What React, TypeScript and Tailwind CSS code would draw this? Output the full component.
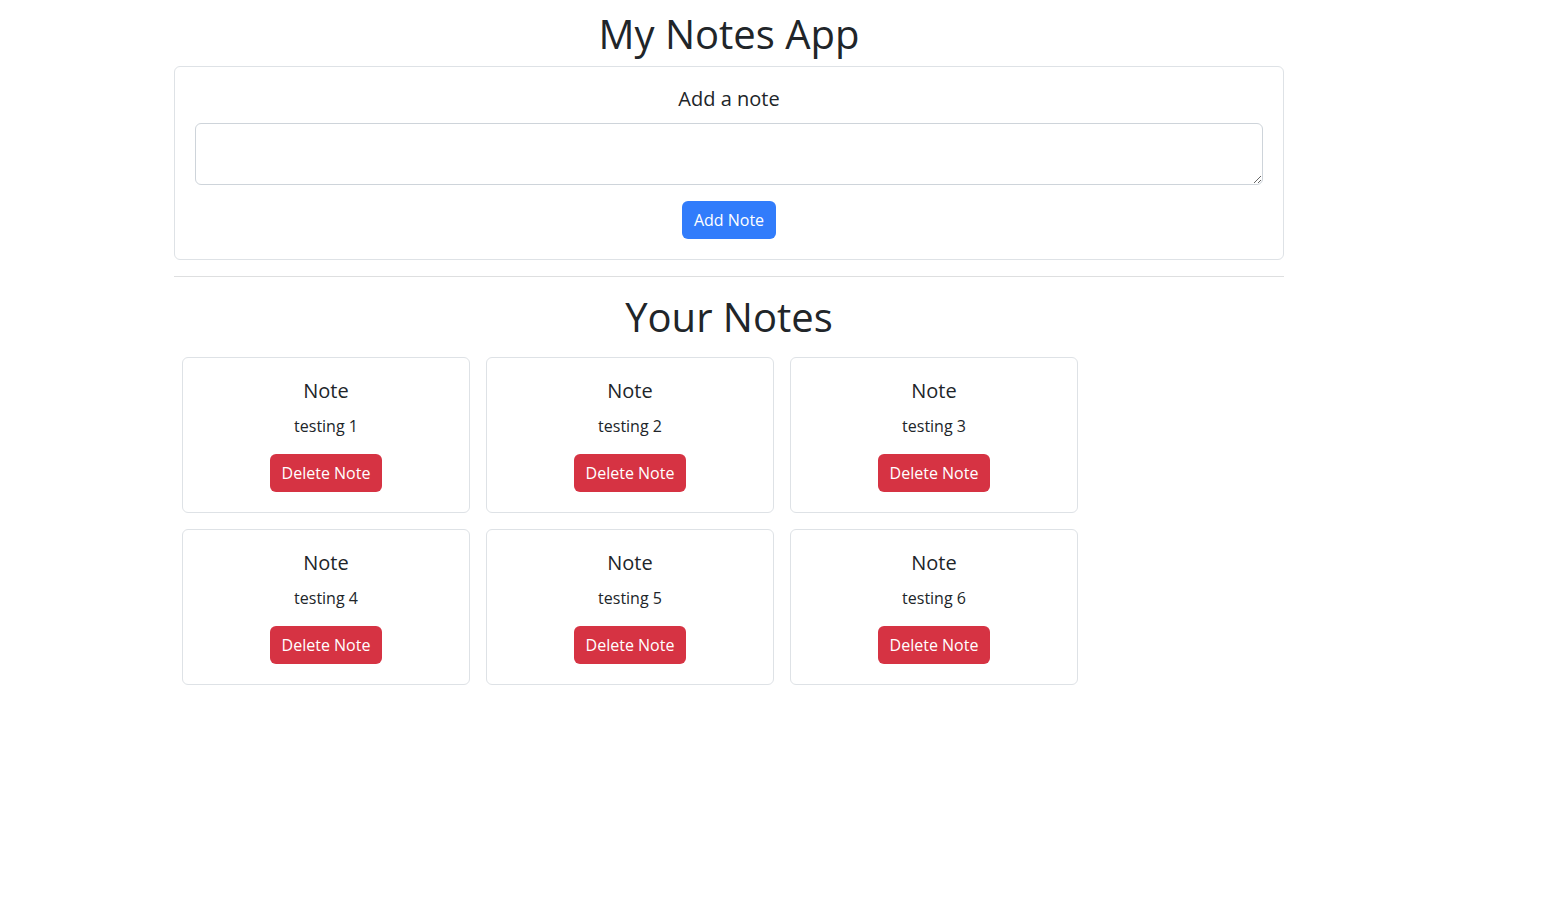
import React from "react";

const notes = ["testing 1", "testing 2", "testing 3", "testing 4", "testing 5", "testing 6"];

export default function App() {
  return (
    <div
      className="min-h-screen bg-white text-[#212529]"
      style={{ fontFamily: '"Open Sans", "Noto Sans", sans-serif' }}
    >
      <div className="w-[1110px] ml-[174px] pt-[10px]">
        <h1 className="text-center text-[40px] leading-[48px] font-medium mb-2">My Notes App</h1>
        <div className="border border-[#dee2e6] rounded-[6px] p-5 text-center">
          <h5 className="text-[20px] leading-[24px] font-medium mb-3">Add a note</h5>
          <textarea
            rows={2}
            className="block w-full h-[62px] border border-[#ced4da] rounded-[6px] px-3 py-1.5 text-base leading-6 outline-none"
          />
          <button className="mt-4 h-[38px] px-3 bg-[#317cfb] text-white text-base leading-6 rounded-[6px]">
            Add Note
          </button>
        </div>
        <hr className="my-4 border-0 border-t border-[#dedfe0]" />
        <h1 className="text-center text-[40px] leading-[48px] font-medium mb-2">Your Notes</h1>
        <div className="flex flex-wrap">
          {notes.map((n) => (
            <div
              key={n}
              className="m-2 w-[288px] border border-[#dee2e6] rounded-[6px] px-5 pt-[21px] pb-5 text-center"
            >
              <h5 className="text-[20px] leading-[24px] font-medium mb-[11px]">Note</h5>
              <p className="text-base leading-6 mb-4">{n}</p>
              <button className="h-[38px] px-3 bg-[#d63343] text-white text-base leading-6 rounded-[6px]">
                Delete Note
              </button>
            </div>
          ))}
          <div className="w-[304px]" />
        </div>
      </div>
    </div>
  );
}
